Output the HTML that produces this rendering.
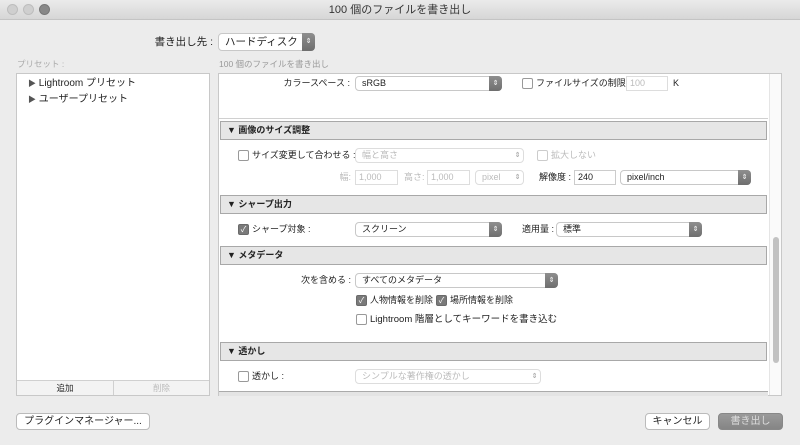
<!DOCTYPE html><html><head><meta charset="utf-8"><style>
*{box-sizing:border-box;margin:0;padding:0}
body{width:800px;height:445px;overflow:hidden;background:#ececec;font-family:"Liberation Sans","Noto Sans CJK JP",sans-serif;font-size:9px;line-height:13px;color:#222;position:relative}
.a{position:absolute;white-space:nowrap}
.r{text-align:right}
.title{left:0;top:0;width:800px;height:20px;background:linear-gradient(#ebebeb,#d6d6d6);border-bottom:1px solid #c4c4c4;text-align:center;line-height:20px;font-size:11px;color:#333}
.dot{width:11px;height:11px;border-radius:50%;background:#cfcfcf;border:1px solid #bdbdbd;top:4px}
.sel{background:#fff;border:1px solid #c8c8c8;border-radius:4px;height:15px;line-height:13px;padding-left:6px;font-size:9px}
.sel .ar{position:absolute;right:-1px;top:-1px;width:13px;height:15px;background:linear-gradient(#8e8e8e,#6e6e6e);border-radius:0 4px 4px 0;color:#fff;font-size:7px;text-align:center;line-height:15px}
.sel.dis{color:#bbb;border-color:#ddd}
.sel.dis .ar{background:none;color:#999}
.cb{width:11px;height:11px;border:1px solid #999;border-radius:2px;background:#fff}
.cb.on{background:#7a7a7a;border-color:#6a6a6a;color:#fff;font-size:8px;line-height:9px;text-align:center}
.hdr{left:220px;width:547px;height:19px;background:#e6e6e6;border:1px solid #a8a8a8;font-weight:bold;line-height:17px;padding-left:6px;font-size:9px}
.inp{background:#fff;border:1px solid #ddd;height:15px;line-height:13px;padding-left:3px;color:#bbb}
.btn{background:#fff;border:1px solid #bbb;border-radius:4px;height:17px;line-height:15px;text-align:center;font-size:10px}
.g{color:#aaa}
</style></head><body>
<div class="a title">100 個のファイルを書き出し</div>
<div class="a dot" style="left:7px"></div><div class="a dot" style="left:23px"></div><div class="a dot" style="left:39px;background:#888;border-color:#777"></div>
<div class="a r" style="right:587px;top:35px;font-size:10.5px;line-height:14px">書き出し先 :</div>
<div class="a sel" style="left:218px;top:33px;width:97px;height:18px;line-height:16px;font-size:10.5px">ハードディスク<div class="ar" style="height:18px;line-height:18px">⇕</div></div>
<div class="a g" style="left:17px;top:58px;font-size:8.5px">プリセット :</div>
<div class="a g" style="left:219px;top:58px;font-size:8.5px;color:#999">100 個のファイルを書き出し</div>
<div class="a" style="left:16px;top:73px;width:194px;height:323px;background:#fff;border:1px solid #c8c8c8"></div>
<div class="a" style="left:28px;top:77px;font-size:10px;line-height:14px"><span style="font-size:8px;color:#555">▶</span> Lightroom プリセット</div>
<div class="a" style="left:28px;top:93px;font-size:10px;line-height:14px"><span style="font-size:8px;color:#555">▶</span> ユーザープリセット</div>
<div class="a" style="left:17px;top:380px;width:97px;height:15px;background:#f3f3f3;border-top:1px solid #d0d0d0;border-right:1px solid #d0d0d0;text-align:center;line-height:14px;font-size:8.5px">追加</div>
<div class="a g" style="left:114px;top:380px;width:95px;height:15px;background:#f3f3f3;border-top:1px solid #d0d0d0;text-align:center;line-height:14px;font-size:8.5px;color:#bbb">削除</div>
<div class="a" style="left:218px;top:73px;width:564px;height:323px;background:#fff;border:1px solid #c8c8c8"></div>
<div class="a" style="left:769px;top:74px;width:12px;height:321px;background:#fafafa;border-left:1px solid #e5e5e5"></div>
<div class="a" style="left:773px;top:237px;width:6px;height:126px;background:#c2c2c2;border-radius:3px"></div>
<div class="a r" style="right:450px;top:77px">カラースペース :</div>
<div class="a sel" style="left:355px;top:76px;width:147px">sRGB<div class="ar">⇕</div></div>
<div class="a cb" style="left:522px;top:78px"></div>
<div class="a" style="left:536px;top:77px">ファイルサイズの制限 :</div>
<div class="a inp" style="left:626px;top:76px;width:42px">100</div>
<div class="a" style="left:673px;top:77px">K</div>
<div class="a" style="left:219px;top:118px;width:549px;border-top:1px solid #d0d0d0"></div>
<div class="a hdr" style="top:121px">▼ 画像のサイズ調整</div>
<div class="a cb" style="left:238px;top:150px"></div>
<div class="a" style="left:252px;top:149px">サイズ変更して合わせる :</div>
<div class="a sel dis" style="left:355px;top:148px;width:169px">幅と高さ<div class="ar">⇕</div></div>
<div class="a cb" style="left:537px;top:150px;border-color:#ccc"></div>
<div class="a g" style="left:551px;top:149px;color:#bbb">拡大しない</div>
<div class="a g r" style="right:449px;top:171px;color:#bbb">幅:</div>
<div class="a inp" style="left:355px;top:170px;width:43px">1,000</div>
<div class="a g" style="left:404px;top:171px;color:#bbb">高さ:</div>
<div class="a inp" style="left:427px;top:170px;width:43px">1,000</div>
<div class="a sel dis" style="left:475px;top:170px;width:49px">pixel<div class="ar">⇕</div></div>
<div class="a r" style="right:229px;top:171px">解像度 :</div>
<div class="a inp" style="left:574px;top:170px;width:42px;color:#222;border-color:#ccc">240</div>
<div class="a sel" style="left:620px;top:170px;width:131px">pixel/inch<div class="ar">⇕</div></div>
<div class="a hdr" style="top:195px">▼ シャープ出力</div>
<div class="a cb on" style="left:238px;top:224px">✓</div>
<div class="a" style="left:252px;top:223px">シャープ対象 :</div>
<div class="a sel" style="left:355px;top:222px;width:147px">スクリーン<div class="ar">⇕</div></div>
<div class="a r" style="right:246px;top:223px">適用量 :</div>
<div class="a sel" style="left:556px;top:222px;width:146px">標準<div class="ar">⇕</div></div>
<div class="a hdr" style="top:246px">▼ メタデータ</div>
<div class="a r" style="right:449px;top:274px">次を含める :</div>
<div class="a sel" style="left:355px;top:273px;width:203px">すべてのメタデータ<div class="ar">⇕</div></div>
<div class="a cb on" style="left:356px;top:295px">✓</div>
<div class="a" style="left:370px;top:294px">人物情報を削除</div>
<div class="a cb on" style="left:436px;top:295px">✓</div>
<div class="a" style="left:450px;top:294px">場所情報を削除</div>
<div class="a cb" style="left:356px;top:314px"></div>
<div class="a" style="left:370px;top:313px;font-size:9.5px">Lightroom 階層としてキーワードを書き込む</div>
<div class="a hdr" style="top:342px">▼ 透かし</div>
<div class="a cb" style="left:238px;top:371px"></div>
<div class="a" style="left:252px;top:370px">透かし :</div>
<div class="a sel dis" style="left:355px;top:369px;width:186px">シンプルな著作権の透かし<div class="ar">⇕</div></div>
<div class="a" style="left:219px;top:391px;width:549px;height:5px;border-top:1px solid #aaa;background:#e4e4e4"></div>
<div class="a btn" style="left:16px;top:413px;width:134px">プラグインマネージャー...</div>
<div class="a btn" style="left:645px;top:413px;width:65px">キャンセル</div>
<div class="a btn" style="left:718px;top:413px;width:65px;background:linear-gradient(#9a9a9a,#858585);border-color:#888;color:#ddd">書き出し</div>
</body></html>
